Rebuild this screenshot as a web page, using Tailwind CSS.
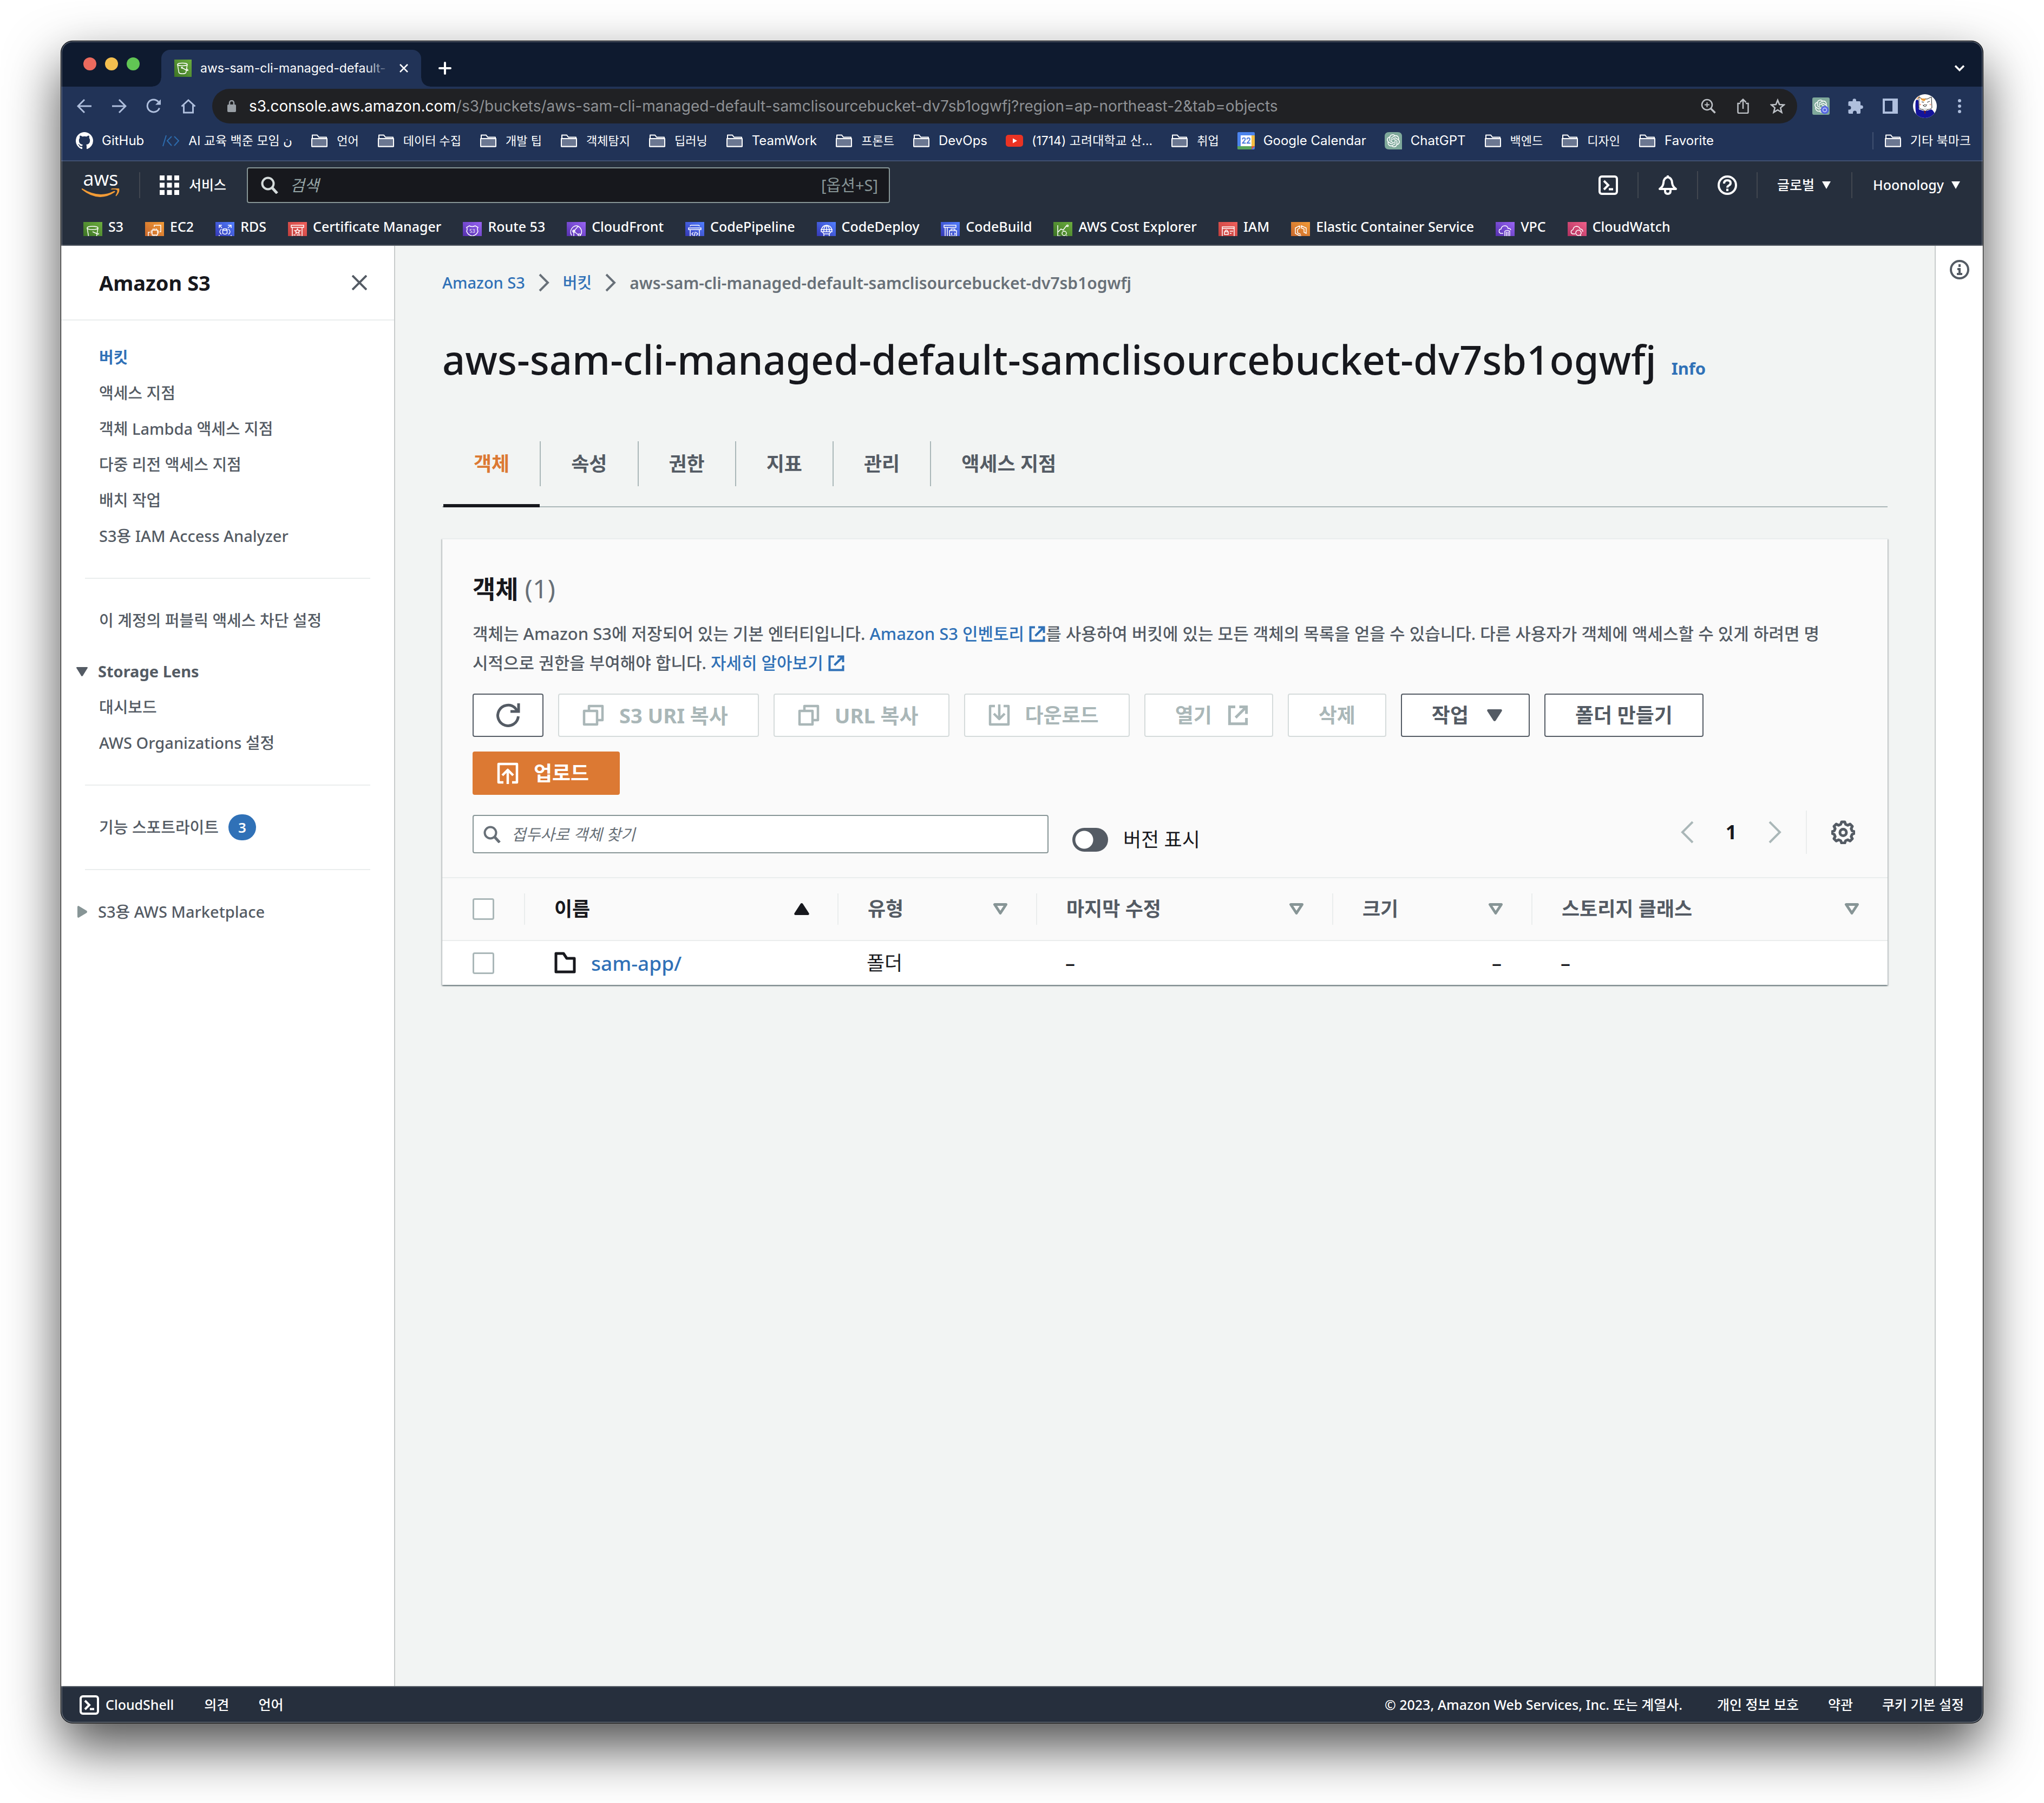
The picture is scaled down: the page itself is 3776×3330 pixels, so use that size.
<!DOCTYPE html>
<html lang="ko">
<head>
<meta charset="utf-8">
<meta name="viewport" content="width=device-width, initial-scale=1">
<title>aws-sam-cli-managed-default - S3 bucket</title>
<script src="https://cdn.jsdelivr.net/npm/@tailwindcss/browser@4"></script>
</head>
<body class="flex min-h-screen bg-white px-[112px] pt-[75px] pb-[147px] font-['Noto_Sans','Noto_Sans_CJK_KR',sans-serif]">

<!-- Shared icon symbols -->
<svg class="hidden" aria-hidden="true">
  <symbol id="folder" viewBox="0 0 32 32"><path d="M3 26.500V5.500h9l3 4h14v17z" fill="none" stroke="#fff" stroke-width="2" stroke-linejoin="round"/><path d="M2 12h28v14.500H2z" fill="#6b7791" stroke="#fff" stroke-width="2" stroke-linejoin="round"/></symbol>
  <symbol id="external" viewBox="0 0 32 32"><path d="M12 3.500H3.500v25h25V20M18 3.500h10.500V14M28 4L12.500 19.500" fill="none" stroke="currentColor" stroke-width="4"/></symbol>
  <symbol id="copy" viewBox="0 0 40 40"><path d="M3 12h24v25H3zM12 11V3h25v26h-9" fill="none" stroke="currentColor" stroke-width="4.500" stroke-linejoin="round"/></symbol>
  <symbol id="sort" viewBox="0 0 28 22"><path d="M3.500 2.500h21L14 18.500z" fill="none" stroke="#879596" stroke-width="5" stroke-linejoin="round"/></symbol>
  <symbol id="shell" viewBox="0 0 36 36"><rect x="2" y="2" width="32" height="32" rx="4" fill="none" stroke="#fff" stroke-width="4"/><path d="M10 10l8 8-8 8M19 25.500h8" fill="none" stroke="#fff" stroke-width="4"/></symbol>
  <symbol id="openai" viewBox="0 0 24 24"><path fill="#fff" d="M22.2819 9.8211a5.9847 5.9847 0 0 0-.5157-4.9108 6.0462 6.0462 0 0 0-6.5098-2.9A6.0651 6.0651 0 0 0 4.9807 4.1818a5.9847 5.9847 0 0 0-3.9977 2.9 6.0462 6.0462 0 0 0 .7427 7.0966 5.98 5.98 0 0 0 .511 4.9107 6.051 6.051 0 0 0 6.5146 2.9001A5.9847 5.9847 0 0 0 13.2599 24a6.0557 6.0557 0 0 0 5.7718-4.2058 5.9894 5.9894 0 0 0 3.9977-2.9001 6.0557 6.0557 0 0 0-.7475-7.0729zm-9.022 12.6081a4.4755 4.4755 0 0 1-2.8764-1.0408l.1419-.0804 4.7783-2.7582a.7948.7948 0 0 0 .3927-.6813v-6.7369l2.02 1.1686a.071.071 0 0 1 .038.052v5.5826a4.504 4.504 0 0 1-4.4945 4.4944zm-9.6607-4.1254a4.4708 4.4708 0 0 1-.5346-3.0137l.142.0852 4.783 2.7582a.7712.7712 0 0 0 .7806 0l5.8428-3.3685v2.3324a.0804.0804 0 0 1-.0332.0615L9.74 19.9502a4.4992 4.4992 0 0 1-6.1408-1.6464zM2.3408 7.8956a4.485 4.485 0 0 1 2.3655-1.9728V11.6a.7664.7664 0 0 0 .3879.6765l5.8144 3.3543-2.0201 1.1685a.0757.0757 0 0 1-.071 0l-4.8303-2.7865A4.504 4.504 0 0 1 2.3408 7.872zm16.5963 3.8558L13.1038 8.364 15.1192 7.2a.0757.0757 0 0 1 .071 0l4.8303 2.7913a4.4944 4.4944 0 0 1-.6765 8.1042v-5.6772a.79.79 0 0 0-.407-.667zm2.0107-3.0231l-.142-.0852-4.7735-2.7818a.7759.7759 0 0 0-.7854 0L9.409 9.2297V6.8974a.0662.0662 0 0 1 .0284-.0615l4.8303-2.7866a4.4992 4.4992 0 0 1 6.6802 4.66zM8.3065 12.863l-2.02-1.1638a.0804.0804 0 0 1-.038-.0567V6.0742a4.4992 4.4992 0 0 1 7.3757-3.4537l-.142.0805L8.704 5.459a.7948.7948 0 0 0-.3927.6813zm1.0976-2.3654l2.602-1.4998 2.6069 1.4998v2.9994l-2.5974 1.4997-2.6067-1.4997Z"/></symbol>
</svg>

<div class="relative flex min-w-0 flex-1 flex-col overflow-hidden rounded-[22px] border border-black bg-[#0e1a2f] shadow-[0_44px_100px_rgba(0,0,0,0.7)]">
  <div class="pointer-events-none absolute inset-0 z-10 rounded-[21px] shadow-[inset_0_0_0_2px_rgba(255,255,255,0.25)]"></div>

  <!-- Browser tab strip -->
  <div class="flex h-[84px] items-center pr-[34px] pl-[41px] font-['Inter','Noto_Sans_CJK_KR',sans-serif]">
    <div class="flex gap-4">
      <button aria-label="Close window" class="size-6 rounded-full bg-[#ec6a5e]"></button>
      <button aria-label="Minimize window" class="size-6 rounded-full bg-[#f4bf4f]"></button>
      <button aria-label="Zoom window" class="size-6 rounded-full bg-[#61c554]"></button>
    </div>
    <div class="relative ml-10 flex h-[68px] w-[480px] items-center gap-4 self-end rounded-t-2xl bg-[#213357] px-6">
      <span class="absolute bottom-0 -left-4 size-4 bg-[radial-gradient(circle_at_0_0,transparent_15px,#213357_16px)]"></span>
      <span class="absolute -right-4 bottom-0 size-4 bg-[radial-gradient(circle_at_100%_0,transparent_15px,#213357_16px)]"></span>
      <svg class="size-8 shrink-0 bg-linear-to-tr from-[#3d7426] to-[#6cae3e]" viewBox="0 0 32 32" fill="none" stroke="#fff" stroke-width="1.500"><ellipse cx="15" cy="9" rx="9" ry="2.500"/><path d="M6 9l2.500 15c2 3 11 3 13 0L24 9M14 15l9 5c3 1 3-1 0-3"/><circle cx="14" cy="15" r="1" fill="#fff"/></svg>
      <span class="relative w-[352px] text-[23px] whitespace-nowrap text-white">aws-sam-cli-managed-default-<span class="absolute inset-y-0 right-0 w-12 bg-linear-to-r from-transparent to-[#213357]"></span></span>
      <button aria-label="Close tab" class="size-4 shrink-0"><svg class="size-4" viewBox="0 0 16 16" stroke="#fff" stroke-width="2.500"><path d="M1 1l14 14M15 1L1 15"/></svg></button>
    </div>
    <button aria-label="New tab" class="mt-4 ml-8"><svg class="size-6" viewBox="0 0 24 24" stroke="#fff" stroke-width="4" stroke-linecap="round"><path d="M12 2v20M2 12h20"/></svg></button>
    <button aria-label="Search tabs" class="mt-4 ml-auto"><svg class="h-3 w-[18px]" viewBox="0 0 18 12" fill="none" stroke="#fff" stroke-width="3.500"><path d="M1 1.500l8 8 8-8"/></svg></button>
  </div>

  <!-- Toolbar -->
  <div class="flex h-[72px] items-center bg-[#213357] pr-[37px] pl-[29px] font-['Inter','Noto_Sans_CJK_KR',sans-serif] text-[#afbfdd]">
    <div class="flex gap-9">
      <button aria-label="Back"><svg class="size-7" viewBox="0 0 28 28" fill="none" stroke="currentColor" stroke-width="3"><path d="M27 14H3M14 2L2 14l12 12"/></svg></button>
      <button aria-label="Forward"><svg class="size-7" viewBox="0 0 28 28" fill="none" stroke="currentColor" stroke-width="3"><path d="M1 14h24M14 2l12 12-12 12"/></svg></button>
      <button aria-label="Reload"><svg class="size-7" viewBox="0 0 28 28" fill="none" stroke="currentColor" stroke-width="3"><path d="M24.500 17.500A11.500 11.500 0 1 1 22.500 6"/><path d="M27 1.500v10H17z" fill="currentColor" stroke="none"/></svg></button>
      <button aria-label="Home"><svg class="size-7" viewBox="0 0 28 28" fill="none" stroke="currentColor" stroke-width="3"><path d="M1.500 14.500L14 3l12.500 11.500M5.500 12v14h17V12"/></svg></button>
    </div>
    <div class="ml-[30px] flex h-16 min-w-0 flex-1 items-center rounded-full bg-[#202124] pr-[22px] pl-7 text-[#bdc1c6]">
      <svg class="h-[22px] w-4" viewBox="0 0 16 22"><rect y="8" width="16" height="14" rx="2" fill="#9aa0a6"/><path d="M4 9V5a4 4 0 0 1 8 0v4" fill="none" stroke="#9aa0a6" stroke-width="2.500"/></svg>
      <div role="textbox" aria-label="Address" class="ml-6 flex-1 text-[28px] whitespace-nowrap text-[#8e9195]"><span class="text-white">s3.console.aws.amazon.com</span>/s3/buckets/aws-sam-cli-managed-default-samclisourcebucket-dv7sb1ogwfj?region=ap-northeast-2&amp;tab=objects</div>
      <div class="flex gap-9">
        <button aria-label="Zoom level"><svg class="size-7" viewBox="0 0 28 28" fill="none" stroke="currentColor" stroke-width="2.500"><circle cx="11.500" cy="11.500" r="9.500"/><path d="M18.500 18.500l8 8" stroke-width="3.500"/><path d="M7 11.500h9M11.500 7v9" stroke-width="2"/></svg></button>
        <button aria-label="Share"><svg class="size-7" viewBox="0 0 28 28" fill="none" stroke="currentColor" stroke-width="2.500"><path d="M9 9H4.500v16a2 2 0 0 0 2 2h15a2 2 0 0 0 2-2V9H19M14 19V2M8.500 7L14 1.500 19.500 7"/></svg></button>
        <button aria-label="Bookmark"><svg class="size-7" viewBox="0 0 28 28" fill="none" stroke="currentColor" stroke-width="2.600"><path d="M14 3l3.200 8 8.600.600-6.600 5.500 2.200 8.500L14 21l-7.400 4.600 2.200-8.500-6.600-5.500 8.600-.600z"/></svg></button>
      </div>
    </div>
    <button aria-label="Assistant extension" class="ml-7"><svg class="size-8" viewBox="0 0 32 32"><rect width="32" height="32" rx="3" fill="#7fa99b"/><use href="#openai" x="4" y="4" width="24" height="24"/><circle cx="23" cy="23" r="7.500" fill="#5566e0"/><circle cx="23" cy="23" r="3.500" fill="none" stroke="#c9d0ff" stroke-width="1.500"/></svg></button>
    <button aria-label="Extensions" class="ml-[34px]"><svg class="size-7" viewBox="0 0 28 28" fill="currentColor"><path d="M8.500 5V3.500a3.200 3.200 0 0 1 6.500 0V5h6q2 0 2 2v5.500h1.500a3.300 3.300 0 0 1 0 6.600H23V26q0 2-2 2h-5v-2a3.500 3.500 0 0 0-7 0v2H2.500q-2 0-2-2v-5.500h1.500a3.500 3.500 0 0 0 0-7H.5V7q0-2 2-2z"/></svg></button>
    <button aria-label="Side panel" class="ml-9"><svg class="size-7" viewBox="0 0 28 28"><path fill="currentColor" fill-rule="evenodd" d="M0 0h28v28H0zM4 4v20h14V4z"/></svg></button>
    <button aria-label="Profile" class="ml-7"><svg class="size-11" viewBox="0 0 44 44"><defs><clipPath id="av"><circle cx="22" cy="22" r="22"/></clipPath></defs><g clip-path="url(#av)"><rect width="44" height="44" fill="#fff"/><path d="M5 12q3-4 5 0l1 16 9 3h4l10-3q6 3 8 16H8Q3 30 5 12z" fill="#14149a"/><path d="M7 9l5-5" stroke="#f0a56a" stroke-width="2"/><path d="M11 25V5l6 4q5-1 9 0l8-4 1 20q-3 4-12 3-9 1-12-3z" fill="#fff" stroke="#222" stroke-width="1"/><path d="M14 8q6-1 10 1l-3 4q-6-1-7-5z" fill="#e89b3c"/><path d="M16 14l4 1M26 15l5-2M18 20q2 2 4-1 2 3 4 0M19 21q3 4 6 0" stroke="#222" fill="none"/><circle cx="13.500" cy="19" r="1.500" fill="#f5a58f"/><circle cx="32" cy="19" r="1.500" fill="#f5a58f"/><path d="M18 28l4 5 5-5" fill="#fff" stroke="#222"/><path d="M22 30v6" stroke="#7a1c1c" stroke-width="2"/></g></svg></button>
    <button aria-label="Menu" class="ml-9"><svg class="h-7 w-3" viewBox="0 0 12 28" fill="currentColor"><circle cx="6" cy="4" r="3"/><circle cx="6" cy="14" r="3"/><circle cx="6" cy="24" r="3"/></svg></button>
  </div>

  <!-- Bookmarks bar -->
  <div class="flex items-center border-b-2 border-[#405070] bg-[#213357] pr-[22px] pb-2 pl-[27px] font-['Inter','Noto_Sans_CJK_KR',sans-serif] text-[22px] leading-14 whitespace-nowrap text-white">
    <div class="flex gap-[34px]">
      <a href="#" class="flex items-center gap-4 text-2xl leading-14"><svg class="size-8" viewBox="0 0 16 16" fill="#fff"><path d="M8 0C3.580 0 0 3.580 0 8c0 3.540 2.290 6.530 5.470 7.590.4.070.55-.17.55-.38 0-.19-.01-.82-.01-1.490-2.010.37-2.530-.49-2.690-.94-.09-.23-.48-.94-.82-1.130-.28-.15-.68-.52-.01-.53.63-.01 1.080.58 1.230.82.72 1.210 1.870.87 2.330.66.070-.52.28-.87.510-1.070-1.780-.2-3.640-.89-3.640-3.950 0-.87.310-1.590.82-2.150-.08-.2-.36-1.020.08-2.120 0 0 .67-.21 2.200.82.64-.18 1.320-.27 2-.27s1.360.09 2 .27c1.530-1.040 2.200-.82 2.200-.82.44 1.100.16 1.920.08 2.120.51.56.82 1.270.82 2.150 0 3.070-1.870 3.750-3.650 3.950.29.25.54.73.54 1.480 0 1.070-.01 1.930-.01 2.200 0 .21.15.46.55.38A8.010 8.010 0 0 0 16 8c0-4.420-3.580-8-8-8"/></svg>GitHub</a>
      <a href="#" class="flex items-center gap-4 text-[23px] leading-14"><svg class="size-8" viewBox="0 0 32 32" fill="none" stroke="#2d6cae" stroke-width="2"><path d="M7 6L1 26M17 8l-8 8 8 9M22 8l8 8-8 9"/></svg>AI 교육 백준 모임 ن</a>
      <a href="#" class="flex items-center gap-4"><svg class="size-8"><use href="#folder"/></svg>언어</a>
      <a href="#" class="flex items-center gap-4"><svg class="size-8"><use href="#folder"/></svg>데이터 수집</a>
      <a href="#" class="flex items-center gap-4"><svg class="size-8"><use href="#folder"/></svg>개발 팁</a>
      <a href="#" class="flex items-center gap-4"><svg class="size-8"><use href="#folder"/></svg>객체탐지</a>
      <a href="#" class="flex items-center gap-4"><svg class="size-8"><use href="#folder"/></svg>딥러닝</a>
      <a href="#" class="flex items-center gap-4 text-2xl leading-14"><svg class="size-8"><use href="#folder"/></svg>TeamWork</a>
      <a href="#" class="flex items-center gap-4"><svg class="size-8"><use href="#folder"/></svg>프론트</a>
      <a href="#" class="flex items-center gap-4 text-2xl leading-14"><svg class="size-8"><use href="#folder"/></svg>DevOps</a>
      <a href="#" class="flex items-center gap-4 text-[23px] leading-14"><svg class="size-8" viewBox="0 0 32 32"><rect y="5" width="32" height="22" rx="5" fill="#ea3323"/><path d="M13 11.500l8 4.500-8 4.500z" fill="#fff"/></svg>(1714) 고려대학교 산...</a>
      <a href="#" class="flex items-center gap-4"><svg class="size-8"><use href="#folder"/></svg>취업</a>
      <a href="#" class="flex items-center gap-4 text-2xl leading-14"><svg class="size-8" viewBox="0 0 32 32"><rect width="32" height="32" rx="2" fill="#4c84ed"/><path d="M6 6h20v20H6z" fill="#fff"/><path d="M26 6h6v20h-6z" fill="#f3bd42"/><path d="M0 26h26v6H2q-2 0-2-2z" fill="#58a55c"/><path d="M26 26h6l-6 6z" fill="#d85140"/><text x="16" y="21" text-anchor="middle" font-size="14" font-family="Inter" fill="#3f74dd" stroke="#3f74dd" stroke-width=".5">22</text></svg>Google Calendar</a>
      <a href="#" class="flex items-center gap-4 text-2xl leading-14"><svg class="size-8" viewBox="0 0 32 32"><path d="M8 0h16q8 0 8 8v24H8q-8 0-8-8V8q0-8 8-8z" fill="#7fa99b"/><use href="#openai" x="4" y="4" width="24" height="24"/></svg>ChatGPT</a>
      <a href="#" class="flex items-center gap-4"><svg class="size-8"><use href="#folder"/></svg>백엔드</a>
      <a href="#" class="flex items-center gap-4"><svg class="size-8"><use href="#folder"/></svg>디자인</a>
      <a href="#" class="flex items-center gap-4 text-2xl leading-14"><svg class="size-8"><use href="#folder"/></svg>Favorite</a>
    </div>
    <a href="#" class="ml-auto flex items-center gap-4 text-[23px] leading-14"><span class="mr-1 h-8 w-0.5 bg-[#405070]"></span><svg class="size-8"><use href="#folder"/></svg>기타 북마크</a>
  </div>

  <!-- AWS global navigation -->
  <header class="border-b-2 border-[#545b64] bg-[#262f3d] font-medium text-white">
    <div class="flex h-[88px] items-center pr-[42px] pl-[38px]">
      <a href="#" aria-label="AWS" class="flex w-[70px] flex-col items-center"><span class="h-7 font-['Open_Sans',sans-serif] text-4xl leading-5">aws</span><svg class="h-4 w-[70px]" viewBox="0 0 70 16" fill="#f29b36"><path d="M1 0q31 19 58 5 4-1 2 2Q31 27 0 2q-1-2 1-2z"/><path d="M54 1q9-4 15-1 2 7-5 14-2 1-1-2 4-7 2-9-3-2-10-1-2 0-1-1z"/></svg></a>
      <span class="ml-9 h-12 w-0.5 bg-[#414750]"></span>
      <button class="ml-9 flex items-center gap-[18px] text-[25px]"><svg class="size-9" viewBox="0 0 36 36" fill="#fff"><path d="M0 0h9v9H0zM13.500 0h9v9h-9zM27 0h9v9h-9zM0 13.500h9v9H0zM13.500 13.500h9v9h-9zM27 13.500h9v9h-9zM0 27h9v9H0zM13.500 27h9v9h-9zM27 27h9v9h-9z"/></svg>서비스</button>
      <label class="ml-[38px] flex h-[66px] w-[1188px] items-center rounded-sm border-2 border-[#879596] bg-[#17181d] pr-5 pl-6 text-[29px] font-normal">
        <svg class="size-8" viewBox="0 0 32 32" fill="none" stroke="#d5dbdb" stroke-width="4"><circle cx="13" cy="13" r="10.500"/><path d="M20 20l10 11" stroke-width="5"/></svg>
        <input type="text" aria-label="검색" placeholder="검색" class="ml-[22px] min-w-0 flex-1 italic outline-none placeholder:text-[#95a5a6]">
        <span class="text-[#879596]">[옵션+S]</span>
      </label>
      <div class="ml-auto flex items-center gap-9 text-[25px]">
        <button aria-label="CloudShell"><svg class="size-9"><use href="#shell"/></svg></button>
        <span class="h-12 w-0.5 bg-[#414750]"></span>
        <button aria-label="알림"><svg class="size-9" viewBox="0 0 36 36" fill="none" stroke="#fff" stroke-width="4" stroke-linejoin="round"><path d="M18 3q-8 2-8 11-1 7-7 11h30q-6-4-7-11 0-9-8-11z"/><path d="M13 26v3q0 5 5 5t5-5v-3"/><path d="M18 0v4"/></svg></button>
        <span class="h-[52px] w-0.5 bg-[#414750]"></span>
        <button aria-label="도움말"><svg class="size-9" viewBox="0 0 36 36" fill="none" stroke="#fff" stroke-width="4"><circle cx="18" cy="18" r="16"/><path d="M12 15q0-6 6-6t6 5q0 3-3 4.500t-3 4" /><path d="M18 24.500v4.500"/></svg></button>
        <span class="h-12 w-0.5 bg-[#414750]"></span>
        <button class="flex items-center gap-[14px]">글로벌<svg class="h-[14px] w-4" viewBox="0 0 16 14" fill="#fff"><path d="M0 0h16L8 14z"/></svg></button>
        <span class="mx-0.5 h-12 w-0.5 bg-[#414750]"></span>
        <button class="flex items-center gap-[14px]">Hoonology<svg class="h-[14px] w-4" viewBox="0 0 16 14" fill="#fff"><path d="M0 0h16L8 14z"/></svg></button>
      </div>
    </div>
    <nav aria-label="즐겨찾기" class="flex h-[66px] items-center gap-10 pl-[41px] text-[25px] whitespace-nowrap">
      <a href="#" class="flex items-center gap-[11px]"><svg class="mt-2 h-[26px] w-[35px] bg-linear-to-tr from-[#3d7426] to-[#6cae3e]" viewBox="0 0 35 26" fill="none" stroke="#fff" stroke-width="1.500"><ellipse cx="17" cy="11" rx="10" ry="3"/><path d="M7 11l2.500 15M27 11l-2.500 15M17 18l9 4q3 1 2-1"/></svg>S3</a>
      <a href="#" class="flex items-center gap-[11px]"><svg class="mt-2 h-[26px] w-[35px] bg-linear-to-tr from-[#c9672b] to-[#f19b37]" viewBox="0 0 35 26" fill="none" stroke="#fff" stroke-width="1.500"><path d="M13 15h10v9H13zM15 12v3M18 12v3M21 12v3M10 17h3M10 20h3M23 17h3M23 20h3M15 24v2M18 24v2M21 24v2M6 26v-7h3M17 9V6h12v12h-2"/></svg>EC2</a>
      <a href="#" class="flex items-center gap-[11px]"><svg class="mt-2 h-[26px] w-[35px] bg-linear-to-tr from-[#3538b5] to-[#527fff]" viewBox="0 0 35 26" fill="none" stroke="#fff" stroke-width="1.500"><ellipse cx="17.500" cy="14" rx="4" ry="1.500"/><path d="M13.500 14v7q4 3 8 0v-7M7 11V6h5M7 6l5 5M23 6h6v5M29 6l-6 5M11 13q-6 5 0 10M24 13q6 5 0 10M7 24v2M29 24v2"/></svg>RDS</a>
      <a href="#" class="flex items-center gap-[11px]"><svg class="mt-2 h-[26px] w-[35px] bg-linear-to-tr from-[#c13e3c] to-[#f0605c]" viewBox="0 0 35 26" fill="none" stroke="#fff" stroke-width="1.500"><path d="M8 26V10H6V6h23v4h-3v16M8 10h18M17.500 12.500l1.500 3 3.500.5-2.500 2 .500 3-3-1.500-3 1.500.5-3-2.500-2 3.500-.5zM10 24h4M16 24h7"/></svg>Certificate Manager</a>
      <a href="#" class="flex items-center gap-[11px]"><svg class="mt-2 h-[26px] w-[35px] bg-linear-to-tr from-[#5530ad] to-[#9a64f5]" viewBox="0 0 35 26" fill="none" stroke="#fff" stroke-width="1.500"><path d="M12 7q5 3 11 0l5 3q-2 3 0 7-2 7-10.500 9Q9 24 7 17q2-4 0-7z"/><text x="17.500" y="20" text-anchor="middle" font-size="9" font-family="Open Sans" fill="#fff" stroke="none">53</text></svg>Route 53</a>
      <a href="#" class="flex items-center gap-[11px]"><svg class="mt-2 h-[26px] w-[35px] bg-linear-to-tr from-[#5530ad] to-[#9a64f5]" viewBox="0 0 35 26" fill="none" stroke="#fff" stroke-width="1.500"><path d="M9 25Q4 16 12 9q7-5 13 2 5 7 0 14M12 18l9-10M14 18l8 6M13 18v8"/><circle cx="13" cy="17" r="2"/><circle cx="23" cy="24" r="2"/></svg>CloudFront</a>
      <a href="#" class="flex items-center gap-[11px]"><svg class="mt-2 h-[26px] w-[35px] bg-linear-to-tr from-[#3538b5] to-[#527fff]" viewBox="0 0 35 26" fill="none" stroke="#fff" stroke-width="1.500"><path d="M9 8q0-2 2-2h13q2 0 2 2M6 11h23v3H6zM9 14v12M26 14v12M15 19l-3 3 3 3M20 19l3 3-3 3M18.500 18l-2 8"/></svg>CodePipeline</a>
      <a href="#" class="flex items-center gap-[11px]"><svg class="mt-2 h-[26px] w-[35px] bg-linear-to-tr from-[#3538b5] to-[#527fff]" viewBox="0 0 35 26" fill="none" stroke="#fff" stroke-width="1.500"><path d="M8 18q0-11 10-12 10 1 10 12zM13 18q-1-9 5-12 6 3 5 12M18 6v12M10 18l3 4v4M26 18l-3 4v4M13 22h10M7 14h22"/></svg>CodeDeploy</a>
      <a href="#" class="flex items-center gap-[11px]"><svg class="mt-2 h-[26px] w-[35px] bg-linear-to-tr from-[#3538b5] to-[#527fff]" viewBox="0 0 35 26" fill="none" stroke="#fff" stroke-width="1.500"><path d="M6 6h22v4H6zM8 10v16M12 10v16M16 16h13v10H16zM19 16v-3h7v3M21 20l-2 2 2 2M25 20l2 2-2 2"/></svg>CodeBuild</a>
      <a href="#" class="flex items-center gap-[11px]"><svg class="mt-2 h-[26px] w-[35px] bg-linear-to-tr from-[#3d7426] to-[#6cae3e]" viewBox="0 0 35 26" fill="none" stroke="#fff" stroke-width="1.500"><path d="M8 6v20h5M8 19l6-6 4 2 6-8M24 25l3 3"/><circle cx="20" cy="21" r="4"/><circle cx="26" cy="7" r="1.500"/></svg>AWS Cost Explorer</a>
      <a href="#" class="flex items-center gap-[11px]"><svg class="mt-2 h-[26px] w-[35px] bg-linear-to-tr from-[#c13e3c] to-[#f0605c]" viewBox="0 0 35 26" fill="none" stroke="#fff" stroke-width="1.500"><path d="M7 26V9h22v17M7 12h22M11 18h7v5h-7zM12.500 18v-2q2-2 4 0v2M21 17h6M21 21h3"/></svg>IAM</a>
      <a href="#" class="flex items-center gap-[11px]"><svg class="mt-2 h-[26px] w-[35px] bg-linear-to-tr from-[#c9672b] to-[#f19b37]" viewBox="0 0 35 26" fill="none" stroke="#fff" stroke-width="1.500"><path d="M16 7L8 11v10l7 4 4 1M19 7l9 4v10l-4-2v-6l-5-2zM16 7v4l-4 3v6l6 3"/></svg>Elastic Container Service</a>
      <a href="#" class="flex items-center gap-[11px]"><svg class="mt-2 h-[26px] w-[35px] bg-linear-to-tr from-[#5530ad] to-[#9a64f5]" viewBox="0 0 35 26" fill="none" stroke="#fff" stroke-width="1.500"><path d="M14 21H9q-4-2-2-7 2-1 3-1 1-6 7-6 5 0 6 5 4-1 5 3M17 26V17q4-3 9 0v9M20 18v8M23 18v8"/></svg>VPC</a>
      <a href="#" class="flex items-center gap-[11px]"><svg class="mt-2 h-[26px] w-[35px] bg-linear-to-tr from-[#b0305f] to-[#f0608a]" viewBox="0 0 35 26" fill="none" stroke="#fff" stroke-width="1.500"><path d="M14 22H9q-4-2-2-6l3-2q1-6 7-6 5 1 6 5 5 0 5 5"/><circle cx="20" cy="20" r="5"/><path d="M23 24l2 2"/></svg>CloudWatch</a>
    </nav>
  </header>

  <div class="flex flex-1">
    <!-- Service sidebar -->
    <aside class="z-1 w-[617px] shrink-0 border-r-2 border-[#c8cccc] bg-white text-[29px] font-medium text-[#545b64]">
      <div class="flex h-[138px] items-center justify-between border-b-2 border-[#eaeded] pr-[50px] pl-[70px]">
        <h2 class="text-[38px] font-bold text-[#17181d]">Amazon S3</h2>
        <button aria-label="닫기"><svg class="size-7" viewBox="0 0 28 28" stroke="#545b64" stroke-width="4"><path d="M1 1l26 26M27 1L1 27"/></svg></button>
      </div>
      <nav aria-label="Amazon S3" class="pt-[35px] leading-[66px]">
        <ul class="pl-[70px]">
          <li><a href="#" class="block font-bold text-[#3071b7]">버킷</a></li>
          <li><a href="#" class="block">액세스 지점</a></li>
          <li><a href="#" class="block">객체 Lambda 액세스 지점</a></li>
          <li><a href="#" class="block">다중 리전 액세스 지점</a></li>
          <li><a href="#" class="block">배치 작업</a></li>
          <li><a href="#" class="block">S3용 IAM Access Analyzer</a></li>
        </ul>
        <hr class="mx-11 my-11 border-t-2 border-[#eaeded]">
        <a href="#" class="block pl-[70px]">이 계정의 퍼블릭 액세스 차단 설정</a>
        <button class="mt-7 flex items-center gap-[19px] pl-7 font-bold"><svg class="h-[17px] w-[21px]" viewBox="0 0 21 17" fill="#545b64"><path d="M1 0h19q2 1 0 3L12 16q-2 2-3 0L1 3Q-1 1 1 0z"/></svg>Storage Lens</button>
        <ul class="pl-[70px]">
          <li><a href="#" class="block">대시보드</a></li>
          <li><a href="#" class="block">AWS Organizations 설정</a></li>
        </ul>
        <hr class="mx-11 my-11 border-t-2 border-[#eaeded]">
        <a href="#" class="flex items-center gap-[18px] pl-[70px]">기능 스포트라이트<span class="h-12 w-[51px] rounded-full bg-[#3071b7] text-center text-[26px] leading-12 font-semibold text-white">3</span></a>
        <hr class="mx-11 my-11 border-t-2 border-[#eaeded]">
        <button class="flex items-center gap-5 pl-[30px]"><svg class="h-[22px] w-[18px]" viewBox="0 0 18 22" fill="#879596"><path d="M0 2q0-2 2-2l15 9q2 2 0 4L2 22q-2 0-2-2z"/></svg>S3용 AWS Marketplace</button>
      </nav>
    </aside>

    <!-- Bucket page -->
    <main class="min-w-0 flex-1 bg-[#f2f4f3] px-[87px] pt-[38px] text-[#17181d]">
      <nav aria-label="탐색 경로" class="flex h-[60px] items-center gap-[25px] text-[29px] font-medium text-[#687078]">
        <a href="#" class="text-[#3071b7]">Amazon S3</a>
        <svg class="h-[34px] w-5" viewBox="0 0 20 34" fill="none" stroke="#687078" stroke-width="4"><path d="M2 2l15 15L2 32"/></svg>
        <a href="#" class="text-[#3071b7]">버킷</a>
        <svg class="h-[34px] w-5" viewBox="0 0 20 34" fill="none" stroke="#687078" stroke-width="4"><path d="M2 2l15 15L2 32"/></svg>
        <span class="text-[30px] font-semibold">aws-sam-cli-managed-default-samclisourcebucket-dv7sb1ogwfj</span>
      </nav>
      <div class="mt-[60px] flex h-[104px] items-baseline gap-7 whitespace-nowrap">
        <h1 class="text-[74px] leading-[104px] font-medium">aws-sam-cli-managed-default-samclisourcebucket-dv7sb1ogwfj</h1>
        <a href="#" class="text-[31px] font-bold text-[#3071b7]">Info</a>
      </div>

      <div role="tablist" class="mt-[99px] flex h-[122px] border-b-2 border-[#aab7b8] pl-0.5 text-4xl font-bold text-[#545b64]">
        <button role="tab" aria-selected="true" class="flex h-[122px] items-start border-b-[6px] border-[#17181d] text-[#dc7933]"><span class="px-14 leading-[83px]">객체</span></button>
        <button role="tab" class="flex items-start"><span class="border-l-2 border-[#aab7b8] px-14 leading-[83px]">속성</span></button>
        <button role="tab" class="flex items-start"><span class="border-l-2 border-[#aab7b8] px-14 leading-[83px]">권한</span></button>
        <button role="tab" class="flex items-start"><span class="border-l-2 border-[#aab7b8] px-14 leading-[83px]">지표</span></button>
        <button role="tab" class="flex items-start"><span class="border-l-2 border-[#aab7b8] px-14 leading-[83px]">관리</span></button>
        <button role="tab" class="flex items-start"><span class="border-l-2 border-[#aab7b8] px-14 leading-[83px]">액세스 지점</span></button>
      </div>

      <section class="mt-[57px] border-t-2 border-[#eaeded] bg-[#fafafa] shadow-[0_2px_2px_rgba(0,28,36,0.4),2px_2px_2px_rgba(0,28,36,0.15),-2px_2px_2px_rgba(0,28,36,0.15)]">
        <div class="px-14 pt-[61px] pb-11">
          <h2 class="text-[46px] leading-[60px] font-bold">객체 <span class="text-5xl leading-[60px] font-normal text-[#687078]">(1)</span></h2>
          <p class="mt-[26px] pr-12 text-[31px] leading-[54px] font-medium break-all text-[#545b64]">객체는 Amazon S3에 저장되어 있는 기본 엔터티입니다. <a href="#" class="text-[#3071b7]">Amazon S3 인벤토리 <svg class="inline size-8 align-[-5px]"><use href="#external"/></svg></a>를 사용하여 버킷에 있는 모든 객체의 목록을 얻을 수 있습니다. 다른 사용자가 객체에 액세스할 수 있게 하려면 명시적으로 권한을 부여해야 합니다. <a href="#" class="text-[#3071b7]">자세히 알아보기 <svg class="inline size-8 align-[-5px]"><use href="#external"/></svg></a></p>
          <div class="mt-[30px] flex flex-wrap gap-[27px] pr-12 text-[37px] leading-[76px] font-bold text-[#545b64]">
            <button aria-label="새로 고침" class="flex w-[131px] items-center justify-center rounded-sm border-2 border-[#545b64] bg-white"><svg class="size-11" viewBox="0 0 44 44" fill="none" stroke="currentColor" stroke-width="5"><path d="M40.500 24A19 19 0 1 1 34 8l5 6"/><path d="M41 0v15H26" /></svg></button>
            <button disabled class="flex items-center gap-7 rounded-sm border-2 border-[#d5dbdb] bg-white pr-[55px] pl-[43px] text-[38px] leading-[76px] text-[#aab7b8]"><svg class="size-10"><use href="#copy"/></svg>S3 URI 복사</button>
            <button disabled class="flex items-center gap-7 rounded-sm border-2 border-[#d5dbdb] bg-white pr-[55px] pl-[43px] text-[38px] leading-[76px] text-[#aab7b8]"><svg class="size-10"><use href="#copy"/></svg>URL 복사</button>
            <button disabled class="flex items-center gap-7 rounded-sm border-2 border-[#d5dbdb] bg-white pr-[55px] pl-[43px] text-[#aab7b8]"><svg class="size-10" viewBox="0 0 40 40" fill="none" stroke="currentColor" stroke-width="4.500" stroke-linejoin="round"><path d="M12 3H3v34h34V3h-9M20 0v26M10 17l10 10 10-10"/></svg>다운로드</button>
            <button disabled class="flex items-center gap-7 rounded-sm border-2 border-[#d5dbdb] bg-white pr-[43px] pl-[55px] text-[#aab7b8]">열기<svg class="size-10"><use href="#external"/></svg></button>
            <button disabled class="rounded-sm border-2 border-[#d5dbdb] bg-white px-[55px] text-[#aab7b8]">삭제</button>
            <button class="flex items-center gap-[34px] rounded-sm border-2 border-[#545b64] bg-white pr-[49px] pl-[55px]">작업<svg class="h-[22px] w-7" viewBox="0 0 28 22" fill="currentColor"><path d="M2 0h24q3 1 1 4L16 21q-2 2-4 0L1 4Q-1 1 2 0z"/></svg></button>
            <button class="rounded-sm border-2 border-[#545b64] bg-white px-[55px]">폴더 만들기</button>
            <button class="flex items-center gap-7 rounded-sm border-2 border-[#dc7933] bg-[#dc7933] pr-[55px] pl-[43px] text-white"><svg class="size-10" viewBox="0 0 40 40" fill="none" stroke="currentColor" stroke-width="4.500" stroke-linejoin="round"><path d="M12 37H3V3h34v34h-9M20 40V14M10 24l10-10 10 10"/></svg>업로드</button>
          </div>
          <div class="mt-[37px] flex h-[71px] items-center">
            <label class="flex h-full w-[1064px] items-center rounded-sm border-2 border-[#879596] bg-white px-[18px]">
              <svg class="size-8" viewBox="0 0 32 32" fill="none" stroke="#687078" stroke-width="4"><circle cx="13" cy="13" r="10.500"/><path d="M20 20l10 11" stroke-width="5"/></svg>
              <input type="text" aria-label="접두사로 객체 찾기" placeholder="접두사로 객체 찾기" class="ml-5 min-w-0 flex-1 text-[29px] italic outline-none placeholder:text-[#687078]">
            </label>
            <label class="mt-5 ml-11 flex items-center gap-7 text-4xl">
              <input type="checkbox" role="switch" class="h-11 w-[66px] appearance-none rounded-full bg-[#545b64] bg-[radial-gradient(circle_at_22px_50%,#fff_16px,transparent_17px)]">
              버전 표시
            </label>
            <div class="mr-1 mb-2 ml-auto flex items-center">
              <button aria-label="이전 페이지"><svg class="h-[42px] w-[26px]" viewBox="0 0 26 42" fill="none" stroke="#aab7b8" stroke-width="4"><path d="M23 2L4 21l19 19"/></svg></button>
              <button class="w-[136px] text-center text-4xl font-bold">1</button>
              <button aria-label="다음 페이지"><svg class="h-[42px] w-[26px]" viewBox="0 0 26 42" fill="none" stroke="#aab7b8" stroke-width="4"><path d="M3 2l19 19L3 40"/></svg></button>
              <span class="ml-11 h-20 w-0.5 bg-[#eaeded]"></span>
              <button aria-label="설정" class="ml-[45px]"><svg class="size-11" viewBox="0 0 44 44" fill="none" stroke="#545b64" stroke-width="5" stroke-linejoin="round"><path d="M19 3h6l1.500 4.500 4 1.700 4.300-2.200 4.200 4.200-2.200 4.300 1.700 4L43 21v3l-4.500 2-1.700 4 2.200 4-4.200 4.200-4.300-2.200-4 1.700L25 42h-6l-1.500-4.300-4-1.700-4.300 2.200L5 34l2.200-4-1.700-4L1 24v-3l4.500-1.500 1.700-4L5 11.200 9.200 7l4.300 2.200 4-1.700z"/><circle cx="22" cy="22.500" r="6"/></svg></button>
            </div>
          </div>
        </div>

        <table class="w-full table-fixed text-left text-4xl">
          <colgroup><col class="w-[153px]"><col class="w-[579px]"><col class="w-[367px]"><col class="w-[547px]"><col class="w-[368px]"><col></colgroup>
          <thead class="border-y-2 border-[#eaeded] text-[#545b64]">
            <tr class="h-[116px]">
              <th class="p-0"><div class="flex h-[58px] items-center border-r-2 border-[#eaeded] pl-14"><input type="checkbox" aria-label="모두 선택" class="size-10 appearance-none rounded border-[3px] border-[#aab7b8] bg-white"></div></th>
              <th class="p-0 text-[#17181d]"><div class="flex h-[58px] items-center justify-between border-r-2 border-[#eaeded] pr-[52px] pl-[54px]">이름<svg class="h-[22px] w-7" viewBox="0 0 28 22" fill="#17181d"><path d="M12 1q2-2 4 0l11 17q2 3-1 4H2q-3-1-1-4z"/></svg></div></th>
              <th class="p-0"><div class="flex h-[58px] items-center justify-between border-r-2 border-[#eaeded] pr-[52px] pl-[54px]">유형<svg class="h-[22px] w-7"><use href="#sort"/></svg></div></th>
              <th class="p-0"><div class="flex h-[58px] items-center justify-between border-r-2 border-[#eaeded] pr-[52px] pl-[54px]">마지막 수정<svg class="h-[22px] w-7"><use href="#sort"/></svg></div></th>
              <th class="p-0"><div class="flex h-[58px] items-center justify-between border-r-2 border-[#eaeded] pr-[52px] pl-[54px]">크기<svg class="h-[22px] w-7"><use href="#sort"/></svg></div></th>
              <th class="p-0"><div class="flex h-[58px] items-center justify-between pr-[52px] pl-[54px]">스토리지 클래스<svg class="h-[22px] w-7"><use href="#sort"/></svg></div></th>
            </tr>
          </thead>
          <tbody class="bg-white">
            <tr class="h-[82px]">
              <td class="p-0 pl-14"><input type="checkbox" aria-label="sam-app/ 선택" class="block size-10 appearance-none rounded border-[3px] border-[#aab7b8] bg-white"></td>
              <td class="p-0 pl-[54px]"><a href="#" class="flex items-center gap-7 text-[37px] font-medium text-[#3071b7]"><svg class="size-10" viewBox="0 0 40 40" fill="none" stroke="#17181d" stroke-width="5" stroke-linejoin="round"><path d="M3 3h14l6 9h14v25H3z"/></svg>sam-app/</a></td>
              <td class="p-0 pl-[52px]">폴더</td>
              <td class="p-0 pl-[52px] font-medium">–</td>
              <td class="p-0 pr-[57px] text-right font-medium">–</td>
              <td class="p-0 pl-[52px] font-medium">–</td>
            </tr>
          </tbody>
        </table>
      </section>
    </main>

    <!-- Help panel toggle -->
    <div class="flex w-[89px] shrink-0 justify-center border-l-2 border-[#c8cccc] bg-white pt-[26px]">
      <button aria-label="정보" class="size-9"><svg class="size-9" viewBox="0 0 36 36" fill="none" stroke="#545b64" stroke-width="4"><circle cx="18" cy="18" r="16"/><path d="M18 8v5M14 17h4v9M13 26h10" /></svg></button>
    </div>
  </div>

  <!-- Footer -->
  <footer class="flex h-[68px] items-center border-t-2 border-[#545b64] bg-[#262f3d] pr-[35px] pl-[34px] text-[25px] font-medium whitespace-nowrap text-white">
    <button class="flex items-center gap-3"><svg class="size-9"><use href="#shell"/></svg>CloudShell</button>
    <a href="#" class="ml-14">의견</a>
    <button class="ml-[54px]">언어</button>
    <span class="ml-auto">© 2023, Amazon Web Services, Inc. 또는 계열사.</span>
    <a href="#" class="ml-16">개인 정보 보호</a>
    <a href="#" class="ml-[54px]">약관</a>
    <a href="#" class="ml-[54px]">쿠키 기본 설정</a>
  </footer>
</div>
</body>
</html>
